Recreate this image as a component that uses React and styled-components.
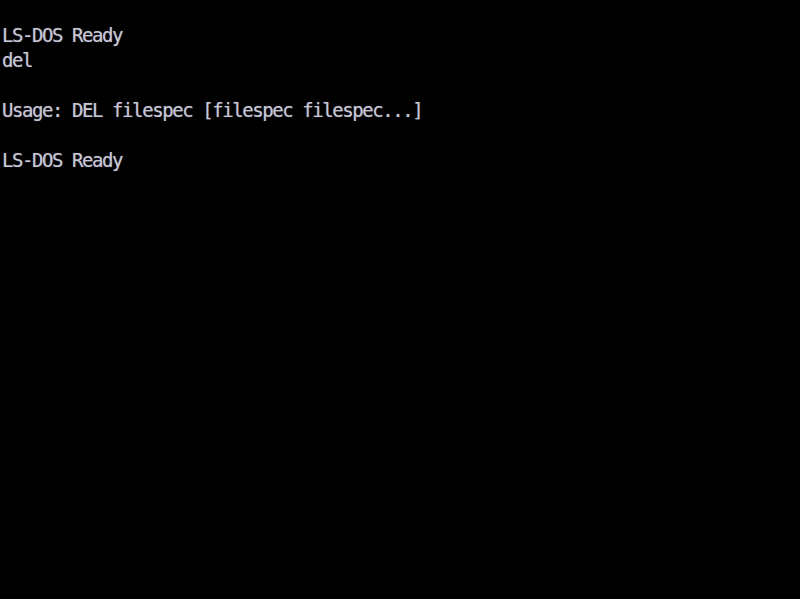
import React from "react";
import styled, { createGlobalStyle } from "styled-components";

const lines = [
  "LS-DOS Ready",
  "del",
  "",
  "Usage: DEL filespec [filespec filespec...]",
  "",
  "LS-DOS Ready",
];

const GlobalStyle = createGlobalStyle`
  html, body {
    margin: 0;
    padding: 0;
    background: #000;
    height: 100%;
  }
  #root {
    min-height: 100vh;
  }
`;

const Screen = styled.div`
  min-height: 100vh;
  box-sizing: border-box;
  background: #000;
  padding: 23px 0 0 2px;
  display: flex;
  flex-direction: column;
`;

const Line = styled.div`
  font-family: "DejaVu Sans Mono", "Liberation Mono", monospace;
  font-size: 19px;
  letter-spacing: -1.43px;
  line-height: 25px;
  height: 25px;
  color: #c6c6d6;
  text-shadow: 0 0 1px rgba(198, 198, 214, 0.6);
  white-space: pre;
`;

const App = () => (
  <>
    <GlobalStyle />
    <Screen>
      {lines.map((text, i) => (
        <Line key={i}>{text}</Line>
      ))}
    </Screen>
  </>
);

export default App;
